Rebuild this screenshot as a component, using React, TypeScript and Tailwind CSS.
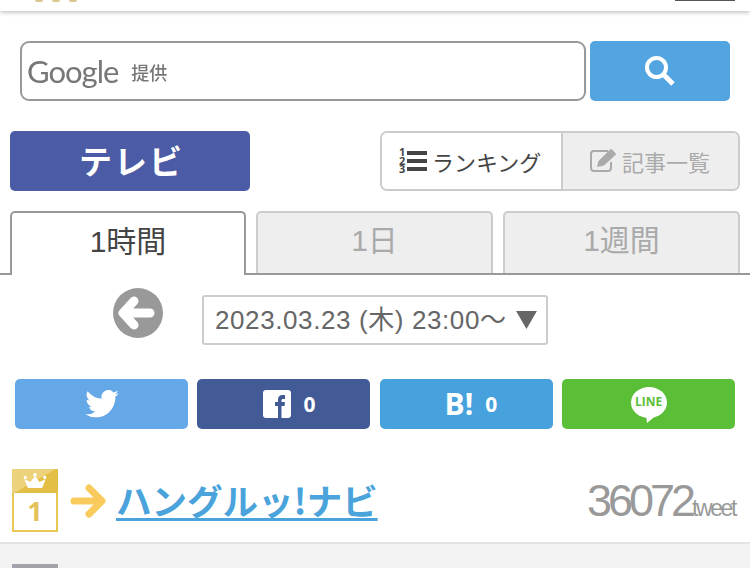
const jp = `font-['Noto_Sans_CJK_JP','Noto_Sans',sans-serif]`;

const ShareButton = ({ color, children }: { color: string; children: React.ReactNode }) => (
  <div className={`w-[173px] h-[50px] rounded-[5px] flex items-center justify-center ${color}`}>
    {children}
  </div>
);

const ListIcon = () => (
  <div className="relative w-[33px] h-[24px] shrink-0">
    <div className="absolute left-0 top-[-1px] text-[#444] text-[11px] leading-[8.5px] font-bold font-['Open_Sans',sans-serif]">
      1<br />2<br />3
    </div>
    <div className="absolute left-[8px] top-[2px] flex flex-col gap-[4px]">
      <div className="w-[20px] h-[4px] bg-[#444]" />
      <div className="w-[20px] h-[4px] bg-[#444]" />
      <div className="w-[20px] h-[4px] bg-[#444]" />
    </div>
  </div>
);

const Tab = ({ label, active, width }: { label: string; active?: boolean; width: string }) => (
  <div
    className={`${width} rounded-t-[5px] border-2 border-b-0 flex items-center justify-center text-[30px] pb-[5px] font-['Liberation_Sans','Noto_Sans_CJK_JP',sans-serif] ${
      active
        ? "h-[64px] -mb-[2px] relative bg-white border-[#999] text-[#444]"
        : "h-[62px] bg-[#eeeeee] border-[#cccccc] text-[#aaaaaa]"
    }`}
  >
    {label}
  </div>
);

export default function App() {
  return (
    <div className={`w-[750px] h-[568px] overflow-hidden bg-white ${jp}`}>
      {/* header */}
      <div className="h-[11px] bg-white shadow-[0_1px_5px_rgba(0,0,0,0.3)] flex justify-between px-[35px] relative">
        <div className="flex gap-[9px] h-[2px]">
          <div className="w-[8px] h-[2px] bg-[#d9c98f] rounded-b-full" />
          <div className="w-[8px] h-[2px] bg-[#d9c98f] rounded-b-full" />
          <div className="w-[8px] h-[2px] bg-[#d9c98f] rounded-b-full" />
        </div>
        <div className="w-[60px] h-[1px] bg-[#555] mr-[-20px]" />
      </div>

      {/* search */}
      <div className="flex gap-[4px] px-[20px] pt-[30px]">
        <div className="w-[566px] h-[60px] rounded-[9px] border-2 border-[#999] flex items-center pl-[5px] gap-[13px] bg-white">
          <span className="text-[31px] text-[#777] tracking-[-1px] font-['Lato',sans-serif] blur-[0.6px] leading-none">Google</span>
          <span className="text-[18px] font-medium text-[#777] blur-[0.5px] mt-[2px] leading-none">提供</span>
        </div>
        <div className="w-[140px] h-[60px] rounded-[5px] bg-[#52a5e0] flex items-center justify-center">
          <svg width="34" height="34" viewBox="0 0 34 34" fill="none" stroke="white" className="mt-[-1px]">
            <circle cx="13.5" cy="13.5" r="9.5" strokeWidth="4" />
            <path d="M20.5 20.5L30 30" strokeWidth="5" />
          </svg>
        </div>
      </div>

      {/* section title + view switch */}
      <div className="flex justify-between px-[10px] mt-[30px]">
        <div className="w-[240px] h-[60px] rounded-[5px] bg-[#4c5ba5] text-white font-semibold text-[33px] tracking-[2px] pl-[3px] flex items-center justify-center">
          テレビ
        </div>
        <div className="w-[360px] h-[60px] flex rounded-[7px] border-2 border-[#cccccc] overflow-hidden">
          <div className="w-[179px] flex items-center pl-[17px] bg-white text-[#444] text-[22px] leading-none whitespace-nowrap">
            <ListIcon />
            <span>ランキング</span>
          </div>
          <div className="flex-1 border-l-2 border-[#cccccc] bg-[#eeeeee] flex items-center pl-[27px] text-[#aaaaaa] text-[22px] leading-none gap-[4px] whitespace-nowrap">
            <svg width="28" height="26" viewBox="0 0 28 26" fill="none" className="shrink-0">
              <path d="M21 14v6a3 3 0 0 1-3 3H4a3 3 0 0 1-3-3V6a3 3 0 0 1 3-3h14" stroke="#aaa" strokeWidth="2" />
              <path d="M7 19l1.500-6L20 1.500a1.500 1.500 0 0 1 2 0l3.500 3.500a1.500 1.500 0 0 1 0 2L14 17.500z" fill="#aaa" />
            </svg>
            <span>記事一覧</span>
          </div>
        </div>
      </div>

      {/* tabs */}
      <div className="flex gap-[10px] px-[10px] mt-[20px] border-b-2 border-[#999]">
        <Tab label="1時間" active width="w-[236px]" />
        <Tab label="1日" width="w-[237px]" />
        <Tab label="1週間" width="w-[237px]" />
      </div>

      {/* date picker */}
      <div className="flex items-start pl-[113px] pt-[13px] h-[104px]">
        <svg width="50" height="50" viewBox="0 0 50 50">
          <circle cx="25" cy="25" r="25" fill="#999" />
          <path d="M21 13L10 25l11 12M14 25h23" fill="none" stroke="white" strokeWidth="9" strokeLinecap="round" strokeLinejoin="round" />
        </svg>
        <div className="ml-[39px] mt-[7px] w-[346px] h-[50px] rounded-[3px] border-2 border-[#cccccc] flex items-center pl-[11px] text-[26px] tracking-[0.6px] text-[#666] whitespace-nowrap leading-none font-['Liberation_Sans','Noto_Sans_CJK_JP',sans-serif]">
          2023.03.23 (木) 23:00～
          <svg width="21" height="18" viewBox="0 0 22 19" fill="#666" className="ml-[9px] shrink-0">
            <path d="M0 0h22L11 19z" />
          </svg>
        </div>
      </div>

      {/* share */}
      <div className="flex pl-[15px]">
        <ShareButton color="bg-[#65a8e8]">
          <svg width="34" height="28" viewBox="0 0 24 20" fill="white">
            <path d="M24 2.400a10 10 0 0 1-2.800.8A5 5 0 0 0 23.300.5a10 10 0 0 1-3.100 1.200A4.900 4.900 0 0 0 11.800 6.200 14 14 0 0 1 1.700.9a4.900 4.900 0 0 0 1.500 6.600 4.900 4.900 0 0 1-2.200-.6c0 2.400 1.700 4.400 3.900 4.900a5 5 0 0 1-2.200.1 4.900 4.900 0 0 0 4.600 3.400A9.900 9.900 0 0 1 0 17.300 14 14 0 0 0 7.500 19.500c9.100 0 14.300-7.700 14-14.600A10 10 0 0 0 24 2.400z" />
          </svg>
        </ShareButton>
        <div className="w-[9px]" />
        <ShareButton color="bg-[#425a96]">
          <div className="relative w-[28px] h-[28px] bg-white rounded-[3px] overflow-hidden ml-[12px]">
            <svg width="28" height="28" viewBox="0 0 28 28" fill="#425a96">
              <path d="M15 28V16h-3v-4h3V9.500C15 6.500 16.800 5 19.500 5H22v4h-1.800c-1.300 0-1.700.7-1.700 1.700V12H22l-.5 4h-3v12z" />
            </svg>
          </div>
          <span className="ml-[12px] text-white font-bold text-[21px] font-['Open_Sans',sans-serif] leading-none">0</span>
        </ShareButton>
        <div className="w-[10px]" />
        <ShareButton color="bg-[#47a1dd]">
          <span className="text-white font-bold text-[30px] font-['Open_Sans',sans-serif] leading-none ml-[9px]">B!</span>
          <span className="ml-[12px] text-white font-bold text-[21px] font-['Open_Sans',sans-serif] leading-none">0</span>
        </ShareButton>
        <div className="w-[9px]" />
        <ShareButton color="bg-[#5abf37]">
          <div className="relative w-[36px] h-[36px] mt-[1px]">
            <div className="w-[36px] h-[31px] rounded-[50%] bg-white flex items-center justify-center text-[#5abf37] text-[12px] font-bold leading-none font-['Open_Sans',sans-serif]">
              LINE
            </div>
            <svg className="absolute left-[15px] top-[27px]" width="12" height="9" viewBox="0 0 12 9" fill="white">
              <path d="M0 0h12L1 9z" />
            </svg>
          </div>
        </ShareButton>
      </div>

      {/* rank row */}
      <div className="h-[115px] border-b-2 border-[#e4e4e4] flex items-start pl-[12px] pr-[15px] pt-[40px]">
        <div className="w-[46px] h-[63px] border-2 border-[#e6c654] bg-white shrink-0">
          <div className="h-[24px] -m-[2px] mb-0 w-[46px] bg-[linear-gradient(150deg,#edd27c_50%,#e3bf45_50%)] flex items-center justify-center">
            <svg width="26" height="16" viewBox="0 0 26 18" fill="white">
              <path d="M5 17L1 7l7 3 5-7 5 7 7-3-4 10z" />
              <circle cx="13" cy="2" r="2" />
              <circle cx="2" cy="5" r="1.800" />
              <circle cx="24" cy="5" r="1.800" />
            </svg>
          </div>
          <div className="text-center text-[#e3c25a] font-bold text-[27px] leading-[36px] font-['Open_Sans',sans-serif]">1</div>
        </div>
        <svg width="36" height="34" viewBox="0 0 36 34" fill="none" stroke="#f8cb5c" strokeWidth="7" strokeLinecap="round" strokeLinejoin="round" className="ml-[12px] mt-[15px] shrink-0">
          <path d="M4 17h27M19 4l13 13-13 13" />
        </svg>
        <a className="ml-[10px] mt-[7px] text-[#4aa3da] text-[35.5px] font-bold underline underline-offset-[3px] decoration-[3px] leading-[48px] whitespace-nowrap">
          ハングルッ!ナビ
        </a>
        <div className="ml-auto mt-[6px] text-[#999] font-['Liberation_Sans',sans-serif] tracking-[-4px] text-[45px] leading-[52px] whitespace-nowrap">
          36072<span className="text-[23px] tracking-[-2.4px]">tweet</span>
        </div>
      </div>

      {/* next row */}
      <div className="h-[30px] bg-[#f3f3f3] pl-[12px] pt-[20px]">
        <div className="w-[46px] h-[24px] bg-[#a3a3ab]" />
      </div>
    </div>
  );
}
